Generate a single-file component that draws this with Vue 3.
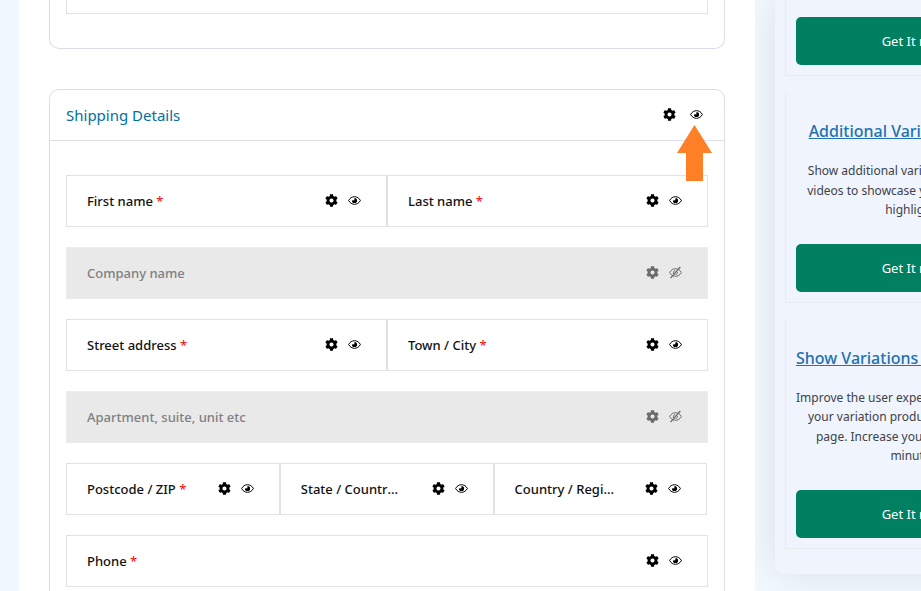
<script setup>
import { h } from 'vue'

const rows = [
  [{ name: 'First name', required: true }, { name: 'Last name', required: true }],
  [{ name: 'Company name', off: true }],
  [{ name: 'Street address', required: true }, { name: 'Town / City', required: true }],
  [{ name: 'Apartment, suite, unit etc', off: true }],
  [
    { name: 'Postcode / ZIP', required: true },
    { name: 'State / Country', required: true },
    { name: 'Country / Region', required: true }
  ],
  [{ name: 'Phone', required: true }]
]

const promos = [
  {
    title: 'Additional Variation Images',
    lines: ['Show additional variation images with', 'videos to showcase your products and', 'highlights.']
  },
  {
    title: 'Show Variations as Single Items',
    lines: [
      'Improve the user experience by showing all',
      'your variation products on every shop',
      'page. Increase your revenue within',
      'minutes.'
    ]
  }
]

const GearIcon = () =>
  h('svg', { viewBox: '0 0 512 512', width: 13, height: 13, fill: 'currentColor', 'aria-hidden': 'true' }, [
    h('path', {
      d: 'M487.4 315.7l-42.6-24.6c4.3-23.2 4.3-47 0-70.2l42.6-24.6c4.9-2.8 7.1-8.6 5.5-14-11.1-35.6-30-67.8-54.7-94.6-3.8-4.1-10-5.1-14.8-2.3L380.8 110c-17.9-15.4-38.5-27.3-60.8-35.1V25.8c0-5.6-3.9-10.5-9.4-11.7-36.7-8.2-74.3-7.8-109.2 0-5.5 1.2-9.4 6.1-9.4 11.7V75c-22.2 7.9-42.8 19.8-60.8 35.1L88.7 85.5c-4.9-2.8-11-1.9-14.8 2.3-24.7 26.7-43.6 58.9-54.7 94.6-1.7 5.4.6 11.2 5.5 14L67.3 221c-4.3 23.2-4.3 47 0 70.2l-42.6 24.6c-4.9 2.8-7.1 8.6-5.5 14 11.1 35.6 30 67.8 54.7 94.6 3.8 4.1 10 5.1 14.8 2.3l42.6-24.6c17.9 15.4 38.5 27.3 60.8 35.1v49.2c0 5.6 3.9 10.5 9.4 11.7 36.7 8.2 74.3 7.8 109.2 0 5.5-1.2 9.4-6.1 9.4-11.7v-49.2c22.2-7.9 42.8-19.8 60.8-35.1l42.6 24.6c4.9 2.8 11 1.9 14.8-2.3 24.7-26.7 43.6-58.9 54.7-94.6 1.5-5.5-.7-11.3-5.6-14.1zM256 336c-44.1 0-80-35.9-80-80s35.9-80 80-80 80 35.9 80 80-35.9 80-80 80z'
    })
  ])

const EyeIcon = (props) =>
  h('svg', { viewBox: '0 0 13 13', width: 13, height: 13, fill: 'none', stroke: 'currentColor', 'aria-hidden': 'true' },
    props.off
      ? [
          h('path', { d: 'M.6 6.5C2 4 4.1 2.7 6.5 2.7S11 4 12.4 6.5C11 9 8.9 10.3 6.5 10.3S2 9 .6 6.5z' }),
          h('path', { d: 'M5 8.3C3.9 7 4.3 5 6.2 4.5M8.6 6.2C8.5 7.6 7.6 8.4 6.5 8.7' }),
          h('path', { d: 'M1.6 12.2L11.3 1', 'stroke-width': 1.2 })
        ]
      : [
          h('path', { d: 'M.6 6.5C2 3.9 4.1 2.7 6.5 2.7S11 3.9 12.4 6.5C11 9.1 8.9 10.3 6.5 10.3S2 9.1 .6 6.5z' }),
          h('path', { d: 'M6.5 3.9a2.6 2.6 0 1 1-2.6 2.6L6.3 6.3z', fill: 'currentColor', stroke: 'none' })
        ]
  )
EyeIcon.props = ['off']
</script>

<template>
  <div class="page">
    <main class="content">
      <section class="card card-first">
        <div class="field-end"></div>
      </section>

      <section class="card">
        <header class="card-head">
          <h2>Shipping Details</h2>
          <div class="tools">
            <button type="button" aria-label="Section settings"><GearIcon /></button>
            <button type="button" class="pointed" aria-label="Toggle section">
              <EyeIcon />
              <svg class="arrow" viewBox="0 0 35 56" width="35" height="56" aria-hidden="true">
                <path d="M17.5 0L35 28H26V56H9V28H0z" fill="#ff7f27" />
              </svg>
            </button>
          </div>
        </header>
        <div class="rows">
          <div v-for="(row, i) in rows" :key="i" class="row" :class="'cols-' + row.length">
            <div v-for="field in row" :key="field.name" class="field" :class="{ off: field.off }">
              <span class="name">{{ field.name }}<span v-if="field.required" class="star"> *</span></span>
              <div class="tools">
                <button type="button" :aria-label="field.name + ' settings'"><GearIcon /></button>
                <button type="button" :aria-label="'Toggle ' + field.name"><EyeIcon :off="field.off" /></button>
              </div>
            </div>
          </div>
        </div>
      </section>
    </main>

    <aside class="side">
      <article class="promo promo-first">
        <a class="get" href="#">Get It now!</a>
      </article>
      <article v-for="promo in promos" :key="promo.title" class="promo">
        <h3><a href="#">{{ promo.title }}</a></h3>
        <p><span v-for="line in promo.lines" :key="line">{{ line }}</span></p>
        <a class="get" href="#">Get It now!</a>
      </article>
    </aside>
  </div>
</template>

<style>
body {
  margin: 0;
  background: #f2f9fe;
}
</style>

<style scoped>
.page {
  box-sizing: border-box;
  display: grid;
  grid-template-columns: minmax(0, 1fr) 146px;
  column-gap: 20px;
  align-items: start;
  height: 100vh;
  padding-left: 19px;
  overflow: hidden;
  font-family: "Noto Sans", "Open Sans", sans-serif;
  font-size: 13px;
  color: #111;
}
.content {
  position: relative;
  z-index: 1;
  display: flex;
  flex-direction: column;
  gap: 40px;
  padding: 0 30px 30px;
  background: #fff;
}
.card {
  border: 1px solid #dddde9;
  border-radius: 10px;
}
.card-first {
  padding: 0 16px 34px;
  border-top: 0;
  border-radius: 0 0 10px 10px;
}
.field-end {
  height: 13px;
  border: 1px solid #e2e2e6;
  border-top: 0;
}
.card-head {
  display: flex;
  align-items: center;
  justify-content: space-between;
  height: 50px;
  padding: 0 21px 0 16px;
  border-bottom: 1px solid #dddde9;
}
h2 {
  margin: 0;
  font-size: 15px;
  font-weight: 400;
  color: #0071a1;
}
.tools {
  display: flex;
  flex: none;
  gap: 10px;
  padding-bottom: 2px;
}
.card-head .tools {
  gap: 14px;
}
button {
  display: flex;
  padding: 0;
  border: 0;
  background: none;
  color: #000;
  cursor: pointer;
}
.pointed {
  position: relative;
}
.arrow {
  position: absolute;
  top: 17px;
  left: -13px;
}
.rows {
  display: flex;
  flex-direction: column;
  gap: 20px;
  padding: 34px 16px;
}
.row {
  display: grid;
}
.cols-2 {
  grid-template-columns: repeat(2, 50%);
}
.cols-3 {
  grid-template-columns: repeat(3, 33.3%);
}
.field {
  display: flex;
  align-items: center;
  justify-content: space-between;
  gap: 28px;
  min-width: 0;
  height: 50px;
  padding: 0 25px 0 20px;
  border: 1px solid #e2e2e6;
}
.field.off {
  background: #e9e9e9;
  border-color: #ececec;
  color: #808080;
}
.off button {
  color: #6b6b6b;
}
.name {
  overflow: hidden;
  font-weight: 500;
  line-height: 20px;
  text-overflow: ellipsis;
  white-space: nowrap;
}
.star {
  font-weight: 400;
  color: #f00;
}
.side {
  display: flex;
  flex-direction: column;
  gap: 15px;
  width: 260px;
  padding: 0 10px 25px;
  border-radius: 0 0 10px 10px;
  background: #f0f4fc;
  box-shadow: 0 0 40px rgba(0, 0, 0, 0.1);
}
.promo {
  padding: 27px 10px 10px;
  border: 1px solid #e9ebf0;
  border-top: 0;
  text-align: center;
}
.promo-first {
  padding-top: 17px;
}
h3 {
  margin: 0 0 17px;
  font-size: 16px;
  font-weight: 500;
  line-height: 26px;
  white-space: nowrap;
}
h3 a {
  color: #2271b1;
}
p {
  margin: 0 0 24px;
  font-size: 12px;
  line-height: 1.625;
  color: #3c434a;
}
p span {
  display: block;
  white-space: nowrap;
}
.get {
  display: block;
  border-radius: 5px;
  background: #008060;
  color: #fff;
  line-height: 48px;
  text-decoration: none;
}
</style>
